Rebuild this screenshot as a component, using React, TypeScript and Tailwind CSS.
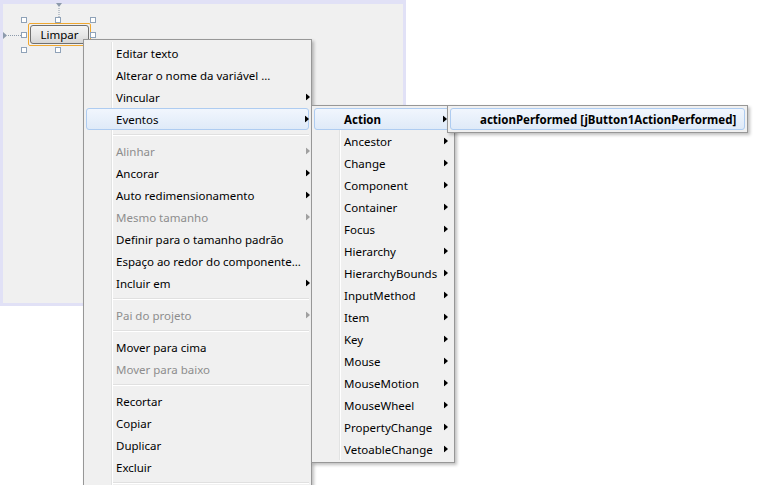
import React from 'react';

type Item = { label?: string; sub?: boolean; disabled?: boolean; active?: boolean; bold?: boolean; sep?: boolean };

const mainItems: Item[] = [
  { label: 'Editar texto' },
  { label: 'Alterar o nome da variável ...' },
  { label: 'Vincular', sub: true },
  { label: 'Eventos', sub: true, active: true },
  { sep: true },
  { label: 'Alinhar', sub: true, disabled: true },
  { label: 'Ancorar', sub: true },
  { label: 'Auto redimensionamento', sub: true },
  { label: 'Mesmo tamanho', sub: true, disabled: true },
  { label: 'Definir para o tamanho padrão' },
  { label: 'Espaço ao redor do componente...' },
  { label: 'Incluir em', sub: true },
  { sep: true },
  { label: 'Pai do projeto', sub: true, disabled: true },
  { sep: true },
  { label: 'Mover para cima' },
  { label: 'Mover para baixo', disabled: true },
  { sep: true },
  { label: 'Recortar' },
  { label: 'Copiar' },
  { label: 'Duplicar' },
  { label: 'Excluir' },
  { sep: true },
];

const eventItems: Item[] = [
  'Action', 'Ancestor', 'Change', 'Component', 'Container', 'Focus', 'Hierarchy', 'HierarchyBounds',
  'InputMethod', 'Item', 'Key', 'Mouse', 'MouseMotion', 'MouseWheel', 'PropertyChange', 'VetoableChange',
].map((l, i) => ({ label: l, sub: true, active: i === 0, bold: i === 0 }));

function Arrow({ disabled }: { disabled?: boolean }) {
  return (
    <svg width="4" height="7" viewBox="0 0 4 7" className="block">
      <path d="M0 0 L4 3.5 L0 7 Z" fill={disabled ? '#a0a0a0' : '#000'} />
    </svg>
  );
}

function Menu({ items, className, arrowRight, tail }: { items: Item[]; className: string; arrowRight: string; tail?: boolean }) {
  return (
    <div className={`absolute flex flex-col bg-[#f0f0f0] border border-[#979797] p-[2px] shadow-[2px_2px_3px_rgba(0,0,0,0.25)] ${className}`}>
      {/* gutter */}
      <div className="absolute top-[2px] bottom-[2px] left-[27px] w-[2px] border-l border-[#e2e3e3]">
        <div className="h-full border-r border-white w-px" />
      </div>
      {items.map((it, i) =>
        it.sep ? (
          <div key={i} className="h-[10px] flex flex-col justify-center pl-[25px]">
            <div className="h-px bg-[#e0e0e0]" />
            <div className="h-px bg-white" />
          </div>
        ) : (
          <div
            key={i}
            className={`relative h-[22px] flex items-center pt-px pr-[24px] whitespace-nowrap ${
              it.active ? 'rounded-[3px] border border-[#aeccf1] bg-gradient-to-b from-[#f1f6fd] to-[#dfeaf8] pl-[29px]' : 'pl-[30px]'
            } ${it.disabled ? 'text-[#8d8d8d]' : 'text-black'} ${it.bold ? 'font-bold' : ''}`}
          >
            {it.label}
            {it.sub && (
              <span className={`absolute top-1/2 -translate-y-1/2 ${arrowRight}`}>
                <Arrow disabled={it.disabled} />
              </span>
            )}
          </div>
        )
      )}
      {tail && <div className="h-[40px]" />}
    </div>
  );
}

function Handle({ x, y }: { x: number; y: number }) {
  return (
    <div
      className="absolute w-[6px] h-[6px] bg-white border border-[#8fa2b8]"
      style={{ left: x - 3, top: y - 3 }}
    />
  );
}

export default function App() {
  return (
    <div className="relative w-[762px] h-[485px] bg-white overflow-hidden text-[11.5px] font-['Noto_Sans',sans-serif]">
      {/* design canvas */}
      <div className="relative w-[406px] h-[306px] border-[3px] border-t-4 border-[#e1e1f6] bg-[#f0f0f0]">
        {/* anchors */}
        <svg className="absolute left-[50px] top-[-1px]" width="12" height="18" viewBox="0 0 12 18">
          <path d="M3 0 L9 0 L6 4 Z" fill="#8c9aab" />
          <line x1="6" y1="5" x2="6" y2="16" stroke="#8c9aab" strokeDasharray="1 1" />
        </svg>
        <svg className="absolute left-0 top-[25px]" width="20" height="12" viewBox="0 0 20 12">
          <path d="M0 3 L4 6.5 L0 10 Z" fill="#8c9aab" />
          <line x1="5" y1="6.5" x2="18" y2="6.5" stroke="#8c9aab" strokeDasharray="1 1" />
        </svg>
        {/* button */}
        <div className="absolute left-[25px] top-[19px] w-[63px] h-[23px] rounded-[2px] border border-[#f0a830] p-px">
          <div className="w-full h-full rounded-[3px] border border-[#707070] bg-gradient-to-b from-[#f4f4f4] via-[#e8e8e8] to-[#d6d6d6] flex items-center justify-center pt-px text-black">
            Limpar
          </div>
        </div>
        <Handle x={21} y={16} />
        <Handle x={55} y={16} />
        <Handle x={90} y={16} />
        <Handle x={21} y={31} />
        <Handle x={90} y={31} />
        <Handle x={21} y={46} />
        <Handle x={55} y={46} />
      </div>

      <Menu items={mainItems} className="left-[83px] top-[39px] w-[229px]" arrowRight="right-[-1px]" tail />
      <Menu items={eventItems} className="left-[311px] top-[105px] w-[144px]" arrowRight="right-[4px]" />
      <Menu
        items={[{ label: 'actionPerformed [jButton1ActionPerformed]', active: true, bold: true }]}
        className="left-[447px] top-[105px] w-[301px]"
        arrowRight="right-[4px]"
      />
    </div>
  );
}
